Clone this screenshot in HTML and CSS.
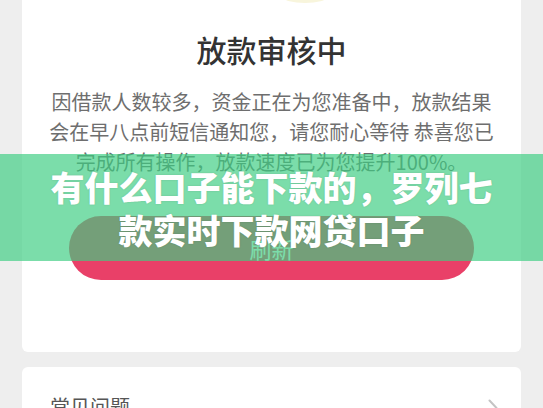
FILE: index.html
```html
<!DOCTYPE html>
<html lang="zh-CN">
<head>
<meta charset="utf-8">
<title>放款审核中</title>
<link rel="stylesheet" href="styles.css">
</head>
<body>
<div class="page">
  <section class="card status">
    <div class="status-icon"><span class="icon-base"></span></div>
    <h1 class="status-title">放款审核中</h1>
    <p class="status-desc">因借款人数较多，资金正在为您准备中，放款结果会在早八点前短信通知您，请您耐心等待 恭喜您已完成所有操作，放款速度已为您提升100%。</p>
    <button class="refresh-btn">刷新</button>
  </section>
  <section class="card faq">
    <span class="faq-title">常见问题</span>
    <svg class="chevron" width="10" height="18" viewBox="0 0 10 18"><path d="M1.5 1.5 L8.5 9 L1.5 16.5" fill="none" stroke="#c4c4c4" stroke-width="2" stroke-linecap="round" stroke-linejoin="round"/></svg>
  </section>
</div>
<div class="banner">
  <p class="banner-text">有什么口子能下款的，罗列七款实时下款网贷口子</p>
</div>
</body>
</html>
```
FILE: styles.css
```css
* { box-sizing: border-box; }
html, body { margin: 0; padding: 0; }
body {
  background: #eeeeee;
  font-family: "Noto Sans CJK SC", "Noto Sans", sans-serif;
  width: 543px;
  height: 408px;
  overflow: hidden;
  position: relative;
}
.page {
  padding: 0 22px;
  display: flex;
  flex-direction: column;
  gap: 15px;
}
.card {
  background: #ffffff;
  border-radius: 6px;
}
.status {
  border-radius: 0 0 6px 6px;
  display: flex;
  flex-direction: column;
  align-items: center;
  padding-bottom: 72px;
}
.status-icon {
  height: 3px;
  width: 100%;
  overflow: hidden;
  display: flex;
  justify-content: center;
  padding-left: 66px;
}
.icon-base {
  display: block;
  width: 44px;
  height: 12px;
  margin-top: -9px;
  border-radius: 50%;
  background: #f8f5dc;
}
.status-title {
  margin: 26px 0 0;
  font-size: 30px;
  line-height: 40px;
  font-weight: 500;
  color: #333333;
}
.status-desc {
  margin: 18px 0 0;
  width: 450px;
  font-size: 20px;
  line-height: 30px;
  color: #6e6e6e;
  text-align: center;
}
.refresh-btn {
  margin-top: 39px;
  width: 405px;
  height: 64px;
  border: none;
  border-radius: 32px;
  background: #e94068;
  color: #ffffff;
  font-family: inherit;
  font-size: 22px;
}
.faq {
  display: flex;
  justify-content: space-between;
  align-items: flex-start;
  padding: 25px 23px 20px 28px;
  height: 80px;
}
.faq-title {
  font-size: 20px;
  line-height: 30px;
  color: #555555;
}
.chevron { margin-top: 7px; }
.banner {
  position: absolute;
  left: 0;
  top: 154px;
  width: 543px;
  height: 107px;
  background: rgba(60, 205, 130, 0.68);
  display: flex;
  align-items: center;
  justify-content: center;
}
.banner-text {
  margin: 0;
  max-width: 462px;
  font-size: 34px;
  line-height: 43px;
  font-weight: 900;
  color: #ffffff;
  text-align: center;
  text-shadow: 0 0 2px rgba(0, 0, 0, 0.15);
}
```
